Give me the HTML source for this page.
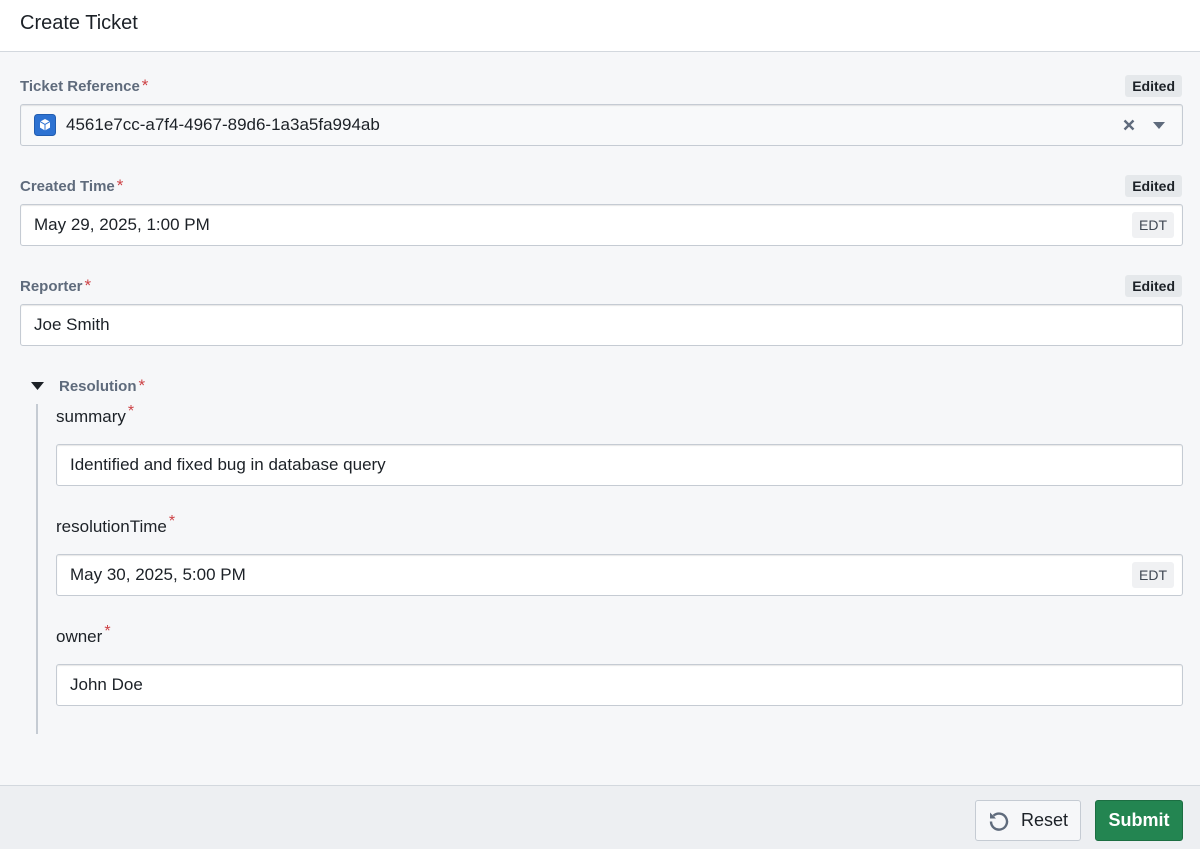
<!DOCTYPE html>
<html><head><meta charset="utf-8"><style>
*{box-sizing:border-box;margin:0;padding:0}
body{width:1200px;height:849px;background:#f6f7f9;font-family:"Liberation Sans",sans-serif;color:#1c2127;position:relative;overflow:hidden}
.a{position:absolute}
.hdr{left:0;top:0;width:1200px;height:52px;background:#fff;border-bottom:1px solid #d3d8de}
.hdr span{position:absolute;left:20px;top:12px;font-size:20px}
.lbl{font-size:15px;font-weight:bold;color:#5f6b7c}
.lbl b{color:#cd4246;font-weight:normal;font-size:17px;margin-left:2px}
.tag{background:#e5e8eb;border-radius:3px;font-size:14px;font-weight:bold;color:#1c2127;padding:2px 7px;height:22px;line-height:18px}
.inp{background:#fff;border:1px solid #c5cbd3;border-radius:3px;box-shadow:inset 0 1px 1px rgba(17,20,24,.1);height:42px;font-size:17px;line-height:40px;padding-left:13px}
.edt{position:absolute;right:8px;top:7px;height:26px;line-height:26px;padding:0 7px;background:#f0f1f3;border-radius:3px;font-size:14px;color:#404854}
.sub{font-size:17px}
.sub b{color:#cd4246;font-weight:normal;position:relative;top:-6px;font-size:16px;margin-left:2px}
.ftr{left:0;top:785px;width:1200px;height:64px;background:#edeff2;border-top:1px solid #d3d8de}
</style></head><body>
<div class="a hdr"><span>Create Ticket</span></div>

<div class="a lbl" style="left:20px;top:76px">Ticket Reference<b>*</b></div>
<div class="a tag" style="right:18px;top:75px">Edited</div>
<div class="a inp" style="left:20px;top:104px;width:1163px;background:#f8f9fa;padding-left:45px">4561e7cc-a7f4-4967-89d6-1a3a5fa994ab
<svg class="a" style="left:13px;top:9px" width="22" height="22" viewBox="0 0 22 22"><rect x="0.5" y="0.5" width="21" height="21" rx="3" fill="#2d72d2" stroke="#215db0"/><path d="M11 5l5 2.6v6L11 16.5 6 13.6v-6z" fill="#fff"/><path d="M6 7.6l5 2.8 5-2.8M11 10.4v6" stroke="#2d72d2" stroke-width="1" fill="none"/></svg>
<svg class="a" style="right:47px;top:14px" width="12" height="12" viewBox="0 0 12 12"><path d="M1.5 1.5l9 9M10.5 1.5l-9 9" stroke="#5f6b7c" stroke-width="2.4"/></svg>
<svg class="a" style="right:17px;top:17px" width="12" height="7" viewBox="0 0 12 7"><path d="M0 0h12L6 7z" fill="#5f6b7c"/></svg>
</div>

<div class="a lbl" style="left:20px;top:176px">Created Time<b>*</b></div>
<div class="a tag" style="right:18px;top:175px">Edited</div>
<div class="a inp" style="left:20px;top:204px;width:1163px">May 29, 2025, 1:00 PM<span class="edt">EDT</span></div>

<div class="a lbl" style="left:20px;top:276px">Reporter<b>*</b></div>
<div class="a tag" style="right:18px;top:275px">Edited</div>
<div class="a inp" style="left:20px;top:304px;width:1163px">Joe Smith</div>

<svg class="a" style="left:31px;top:382px" width="13" height="8" viewBox="0 0 13 8"><path d="M0 0h13L6.5 8z" fill="#1c2127"/></svg>
<div class="a lbl" style="left:59px;top:376px">Resolution<b>*</b></div>
<div class="a" style="left:36px;top:404px;width:2px;height:330px;background:#c5cbd3"></div>

<div class="a sub" style="left:56px;top:407px">summary<b>*</b></div>
<div class="a inp" style="left:56px;top:444px;width:1127px">Identified and fixed bug in database query</div>
<div class="a sub" style="left:56px;top:517px">resolutionTime<b>*</b></div>
<div class="a inp" style="left:56px;top:554px;width:1127px">May 30, 2025, 5:00 PM<span class="edt">EDT</span></div>
<div class="a sub" style="left:56px;top:627px">owner<b>*</b></div>
<div class="a inp" style="left:56px;top:664px;width:1127px">John Doe</div>

<div class="a ftr"></div>
<div class="a" style="left:975px;top:800px;width:106px;height:41px;background:#f6f7f9;border:1px solid #c5cbd3;border-radius:3px;font-size:18px;line-height:39px;padding-left:45px">Reset
<svg class="a" style="left:12px;top:9px" width="22" height="22" viewBox="0 0 22 22"><path d="M5.5 5.8A8 8 0 1 1 3 11.5" stroke="#5f6b7c" stroke-width="2.4" fill="none"/><path d="M2 2.5v6h6z" fill="#5f6b7c"/></svg></div>
<div class="a" style="left:1095px;top:800px;width:88px;height:41px;background:#238551;border:1px solid #1c6e42;border-radius:3px;font-size:18px;font-weight:bold;color:#fff;line-height:39px;text-align:center">Submit</div>
</body></html>
